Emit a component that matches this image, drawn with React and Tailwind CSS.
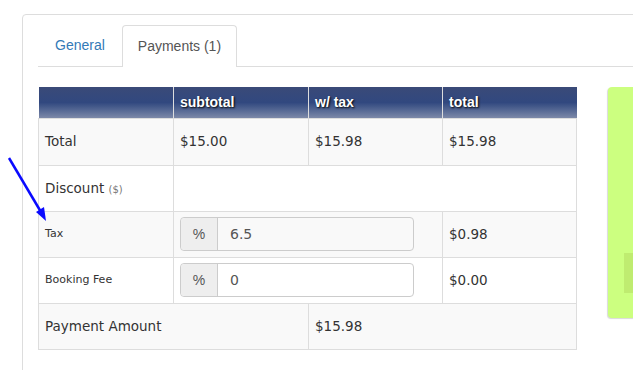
import React from 'react';

const mont = { fontFamily: "'DejaVu Sans', sans-serif" };

const HeadCell = ({ children }) => (
  <th
    className="h-[31px] border-l border-[#dddddd] px-[6px] text-left align-middle text-[14px] font-bold text-white first:border-l-0"
    style={{ fontFamily: "'Liberation Sans', Arial, sans-serif", textShadow: '1px 1px 2px #000' }}
  >
    {children}
  </th>
);

const Cell = ({ children, colSpan, className = '' }) => (
  <td
    colSpan={colSpan}
    className={`h-[46px] border border-[#dddddd] px-[6px] align-middle text-[#333] ${className}`}
  >
    {children}
  </td>
);

const PercentInput = ({ value }) => (
  <div className="flex h-[34px] w-[234px] rounded-[4px] border border-[#cccccc] text-[14px]" style={{ fontFamily: "'Liberation Sans', Arial, sans-serif" }}>
    <span className="flex w-[37px] items-center justify-center rounded-l-[4px] border-r border-[#cccccc] bg-[#eeeeee] text-[#555]">%</span>
    <span className="flex flex-1 items-center px-[12px] text-[#555]" style={mont}>{value}</span>
  </div>
);

export default function App() {
  return (
    <div className="relative h-[370px] w-[633px] overflow-hidden bg-white">
      {/* annotation arrow */}
      <svg className="absolute left-0 top-0" width="60" height="240" viewBox="0 0 60 240">
        <line x1="9" y1="158" x2="41" y2="212" stroke="#0a0aff" strokeWidth="2.5" />
        <polygon points="46,221 36,212 44,207" fill="#0a0aff" />
      </svg>

      <div className="ml-[22px] mt-[14px] h-[400px] w-[640px] rounded-tl-[4px] border border-[#dddddd] pl-[15px] pt-[10px]">
        {/* tabs */}
        <div className="flex h-[42px] border-b border-[#dddddd] text-[14px]" style={{ fontFamily: "'Liberation Sans', Arial, sans-serif" }}>
          <div className="mr-[2px] py-[10px] pl-[17px] pr-[15px] leading-[20px] text-[#337ab7]">General</div>
          <div className="-mb-px rounded-t-[4px] border border-b-0 border-[#dddddd] bg-white px-[15px] py-[10px] leading-[20px] text-[#555]">
            Payments (1)
          </div>
        </div>

        <div className="mt-[20px] flex gap-[31px]">
          <table className="w-[539px] shrink-0 border-collapse">
            <thead>
              <tr className="bg-gradient-to-b from-[#3a4a78] via-[#31487f] to-[#7d89a8]">
                <HeadCell></HeadCell>
                <HeadCell>subtotal</HeadCell>
                <HeadCell>w/ tax</HeadCell>
                <HeadCell>total</HeadCell>
              </tr>
            </thead>
            <tbody style={mont}>
              <tr className="bg-[#f9f9f9] text-[13.5px]">
                <Cell className="h-[47px] w-[135px]">Total</Cell>
                <Cell className="h-[47px] w-[135px]">$15.00</Cell>
                <Cell className="h-[47px] w-[134px]">$15.98</Cell>
                <Cell className="h-[47px]">$15.98</Cell>
              </tr>
              <tr className="bg-white text-[13.5px]">
                <Cell>
                  Discount <span className="text-[10px] text-[#777]">($)</span>
                </Cell>
                <Cell colSpan={3}></Cell>
              </tr>
              <tr className="bg-[#f9f9f9] text-[11px]">
                <Cell>Tax</Cell>
                <Cell colSpan={2}>
                  <PercentInput value="6.5" />
                </Cell>
                <Cell className="text-[13.5px]">$0.98</Cell>
              </tr>
              <tr className="bg-white text-[11px]">
                <Cell>Booking Fee</Cell>
                <Cell colSpan={2}>
                  <PercentInput value="0" />
                </Cell>
                <Cell className="text-[13.5px]">$0.00</Cell>
              </tr>
              <tr className="bg-[#f9f9f9] text-[13.5px]">
                <Cell colSpan={2}>Payment Amount</Cell>
                <Cell colSpan={2}>$15.98</Cell>
              </tr>
            </tbody>
          </table>

          <div className="h-[231px] w-[60px] shrink-0 rounded-[4px] bg-[#ccff80] pl-[16px] pt-[166px] shadow-[-1px_1px_1px_rgba(0,0,0,0.15)]">
            <div className="h-[40px] w-[40px] bg-[#bfec70]"></div>
          </div>
        </div>
      </div>
    </div>
  );
}
